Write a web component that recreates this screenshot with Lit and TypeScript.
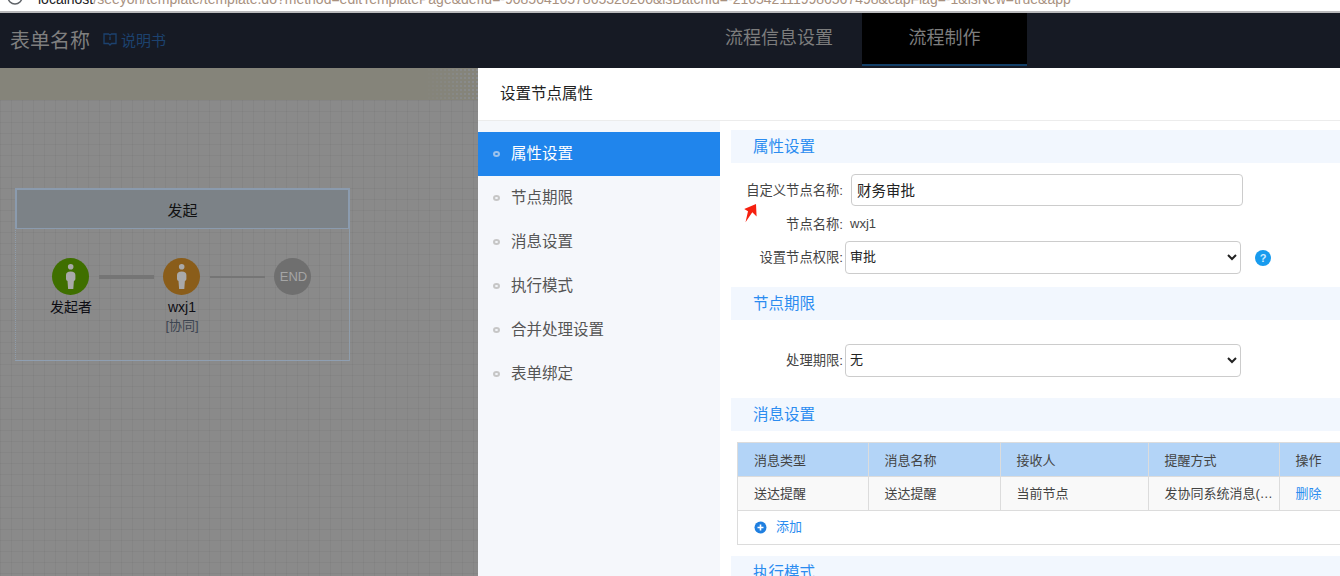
import { LitElement, html, css, svg, unsafeCSS } from 'lit';
import { customElement, state } from 'lit/decorators.js';

const FONT = unsafeCSS(`"Liberation Sans", "Noto Sans CJK SC", sans-serif`);

const NAV_ITEMS = ['属性设置', '节点期限', '消息设置', '执行模式', '合并处理设置', '表单绑定'];

// positions on the flow canvas, relative to the canvas origin (y = 100 on page)
const FLOW_NODES = [
  { x: 52, y: 158, color: '#3f6f00', label: '发起者', person: true },
  { x: 163, y: 158, color: '#8a5d1a', label: 'wxj1', sub: '[协同]', person: true },
  { x: 274, y: 158, color: '#6f6f6f', label: '', person: false },
];

const FLOW_EDGES = [
  { x: 99, y: 175, w: 55, h: 4 },
  { x: 210, y: 176, w: 55, h: 2 },
];

const personIcon = svg`
  <circle cx="18.7" cy="8.7" r="2.800" fill="#a9a9a9"></circle>
  <path d="M14 17q0-3.500 4.700-3.500t4.700 3.500v4q0 1.500-1.500 2l-.6 8h-5.200l-.6-8q-1.500-.5-1.500-2z" fill="#a9a9a9"></path>
`;

@customElement('app-root')
export class AppRoot extends LitElement {
  static styles = css`
    :host {
      display: block;
      width: 1340px;
      height: 576px;
      overflow: hidden;
      position: relative;
      background: #fff;
      font-family: ${FONT};
    }

    /* --- browser url strip, cut off at the top --- */
    .strip {
      height: 11px;
      display: flex;
      align-items: flex-end;
      overflow: hidden;
      background: #fff;
      border-bottom: 2px solid #b9b9bb;
      padding-left: 7px;
      gap: 15px;
    }
    .strip svg { flex: none; margin-bottom: 6px; }
    .url {
      font: 14px/18px 'Liberation Sans', sans-serif;
      white-space: nowrap;
      margin-bottom: 3px;
      color: #a8917f;
    }
    .url b { font-weight: 400; color: #202124; }

    /* --- dark page header --- */
    header {
      height: 55px;
      background: #161a24;
      display: flex;
      align-items: stretch;
      padding-left: 10px;
    }
    .form-name {
      font-size: 20px;
      line-height: 56px;
      color: #7f7f7f;
    }
    .manual {
      display: flex;
      align-items: center;
      gap: 4px;
      margin-left: 13px;
      padding-bottom: 2px;
      font-size: 15px;
      color: #1c426f;
    }
    .tabs {
      position: absolute;
      left: 696px;
      top: 13px;
      height: 53px;
      display: flex;
    }
    .tab {
      width: 166px;
      box-sizing: border-box;
      text-align: center;
      font-size: 18px;
      line-height: 51px;
      color: #7d7d7d;
    }
    .tab.active {
      width: 165px;
      background: #000;
      border-bottom: 2px solid #123f68;
    }

    /* --- dimmed flow canvas --- */
    .band {
      height: 32px;
      background: #85847a;
      position: relative;
    }
    .band::after {
      content: '';
      position: absolute;
      right: 862px;
      top: 0;
      bottom: 0;
      width: 55px;
      background: radial-gradient(circle, #8a8d90 0.8px, transparent 1px) 0 0 / 4px 4px;
      -webkit-mask-image: linear-gradient(to right, transparent, #000);
    }
    .canvas {
      position: relative;
      height: 476px;
      background-color: #8a8a8a;
      background-image:
        linear-gradient(to right, rgba(0, 0, 0, 0.035) 1px, transparent 1px),
        linear-gradient(to bottom, rgba(0, 0, 0, 0.035) 1px, transparent 1px);
      background-size: 11px 11px;
    }
    .lane {
      position: absolute;
      left: 15px;
      top: 88px;
      width: 335px;
      height: 173px;
      box-sizing: border-box;
      border-left: 1px dotted #8f9dab;
      border-right: 1px solid #8f9dab;
      border-bottom: 1px solid #8f9fb2;
    }
    .lane-head {
      margin: 0 -1px;
      height: 41px;
      box-sizing: border-box;
      border: 2px solid #8b9bae;
      border-bottom-width: 1px;
      background: #7c8287;
      text-align: center;
      font-size: 15px;
      line-height: 42px;
      color: #111;
    }
    .edge {
      position: absolute;
      background: #757575;
    }
    .node {
      position: absolute;
      width: 37px;
    }
    .node-circle {
      width: 37px;
      height: 37px;
      border-radius: 50%;
      display: flex;
      align-items: center;
      justify-content: center;
      font-size: 13px;
      color: #a5a5a5;
    }
    .node-end { padding-left: 2px; }
    .node-text {
      position: absolute;
      left: calc(50% + 0.5px);
      top: 39px;
      transform: translateX(-50%);
      text-align: center;
      white-space: nowrap;
      font-size: 14px;
      line-height: 20px;
      color: #0d0d14;
    }
    .node-sub {
      font-size: 13px;
      line-height: 18px;
      color: #3c4450;
    }

    /* --- settings drawer --- */
    .drawer {
      position: absolute;
      left: 478px;
      top: 68px;
      right: 0;
      bottom: 0;
      background: #fff;
      display: flex;
      flex-direction: column;
    }
    .drawer-title {
      height: 53px;
      flex: none;
      box-sizing: border-box;
      padding-left: 22px;
      border-bottom: 1px solid #ececec;
      font-size: 15.5px;
      line-height: 51px;
      color: #222;
    }
    .drawer-body {
      flex: 1;
      display: flex;
      min-height: 0;
    }
    nav {
      width: 242px;
      flex: none;
      padding-top: 11px;
      background: #f5f7fb;
    }
    .nav-item {
      height: 44px;
      display: flex;
      align-items: center;
      gap: 11px;
      padding-left: 15px;
      font-size: 15.5px;
      color: #555;
    }
    .nav-item.active {
      background: #2085ec;
      color: #fff;
    }
    .nav-dot {
      width: 7px;
      height: 6px;
      box-sizing: border-box;
      border: 2px solid #c6c6c6;
      border-radius: 50%;
    }
    .nav-item.active .nav-dot { border-color: #9cc2ec; }
    .nav-text { margin-bottom: 4px; }

    main {
      flex: 1;
      min-width: 0;
      padding: 9px 0 0 11px;
      overflow: hidden;
    }
    .section-head {
      height: 33px;
      box-sizing: border-box;
      padding-left: 22px;
      background: #f2f7fe;
      font-size: 15.5px;
      line-height: 34px;
      color: #2b8cf0;
    }
    .form-group {
      padding: 11px 0 13px;
    }
    .form-group.period { padding: 24px 0 21px; }
    .row {
      display: flex;
      align-items: center;
    }
    .row-plain {
      height: 20px;
      margin: 8px 0 7px;
    }
    .label {
      width: 112px;
      flex: none;
      padding-bottom: 2px;
      text-align: right;
      font-size: 13.3px;
      color: #444;
      white-space: nowrap;
    }
    .value {
      margin-left: 7px;
      padding-bottom: 2px;
      font-size: 13px;
      color: #444;
    }
    input {
      margin-left: 8px;
      width: 392px;
      height: 32px;
      box-sizing: border-box;
      padding: 0 5px 2px;
      border: 1px solid #ccc;
      border-radius: 4px;
      font: 14.5px ${FONT};
      color: #222;
      outline: none;
    }
    select {
      margin-left: 2px;
      width: 396px;
      height: 33px;
      box-sizing: border-box;
      padding-bottom: 2px;
      border: 1px solid #ccc;
      border-radius: 4px;
      background: #fff;
      font: 13px ${FONT};
      color: #222;
      outline: none;
    }
    .help {
      margin-left: 14px;
      width: 16px;
      height: 16px;
      border-radius: 50%;
      background: #189bee;
      color: #cfeaff;
      font: 700 11px/16px 'Liberation Sans', sans-serif;
      text-align: center;
    }

    /* --- message table --- */
    .table-wrap {
      margin: 11px 0 11px 6px;
      width: 640px;
      border: 1px solid #dcdcdc;
      box-sizing: border-box;
    }
    table {
      width: 100%;
      table-layout: fixed;
      border-collapse: collapse;
      font-size: 13px;
      color: #444;
    }
    th, td {
      padding: 0 4px 0 16px;
      box-sizing: border-box;
      border-right: 1px solid #dcdcdc;
      border-bottom: 1px solid #dcdcdc;
      text-align: left;
      font-weight: 400;
      white-space: nowrap;
      overflow: hidden;
      text-overflow: ellipsis;
    }
    th { background: #b3d4f7; height: 33px; }
    td { background: #f9f9f9; height: 34px; padding-bottom: 2px; }
    .del { color: #2b8cf0; }
    .add {
      height: 33px;
      box-sizing: border-box;
      display: flex;
      align-items: center;
      gap: 9px;
      padding: 0 0 3px 16px;
      font-size: 13px;
      color: #2b8cf0;
    }
    .add svg { margin-top: 4px; }

    .pointer {
      position: absolute;
      left: 740px;
      top: 200px;
    }
  `;

  @state() private selected = 0;

  render() {
    return html`
      <div class="strip">
        <svg width="16" height="16" viewBox="0 0 16 16" fill="none" stroke="#5f6368" stroke-width="1.500">
          <circle cx="8" cy="8" r="7"></circle>
        </svg>
        <div class="url"><b>localhost</b>/seeyon/template/template.do?method=editTemplatePage&amp;defId=-9085041657865328200&amp;isBatchId=-2165421119986567498&amp;capFlag=-1&amp;isNew=true&amp;app</div>
      </div>

      <header>
        <div class="form-name">表单名称</div>
        <div class="manual">
          <svg width="14" height="13" viewBox="0 0 14 13" fill="none" stroke="#1c426f" stroke-width="1.300">
            <path d="M1 1h4.500l1.500 1 1.500-1h4.500v9.500h-4.500l-1.500 1.500-1.500-1.500h-4.500z"></path>
            <path d="M7 3.500v3.500"></path>
          </svg>
          说明书
        </div>
        <div class="tabs">
          <div class="tab">流程信息设置</div>
          <div class="tab active">流程制作</div>
        </div>
      </header>

      <div class="band"></div>
      <div class="canvas">
        <div class="lane">
          <div class="lane-head">发起</div>
        </div>
        ${FLOW_EDGES.map(
          (e) => html`<div class="edge" style="left:${e.x}px;top:${e.y}px;width:${e.w}px;height:${e.h}px"></div>`
        )}
        ${FLOW_NODES.map(
          (n) => html`
            <div class="node" style="left:${n.x}px;top:${n.y}px">
              <div class="node-circle" style="background:${n.color}">
                ${n.person
                  ? html`<svg width="37" height="37" viewBox="0 0 37 37">${personIcon}</svg>`
                  : html`<span class="node-end">END</span>`}
              </div>
              ${n.label
                ? html`<div class="node-text">
                    ${n.label}
                    ${n.sub ? html`<div class="node-sub">${n.sub}</div>` : ''}
                  </div>`
                : ''}
            </div>
          `
        )}
      </div>

      <div class="drawer">
        <div class="drawer-title">设置节点属性</div>
        <div class="drawer-body">
          <nav>
            ${NAV_ITEMS.map(
              (item, i) => html`
                <div class="nav-item ${i === this.selected ? 'active' : ''}">
                  <span class="nav-dot"></span><span class="nav-text">${item}</span>
                </div>
              `
            )}
          </nav>
          <main>
            <div class="section-head">属性设置</div>
            <div class="form-group">
              <div class="row">
                <div class="label">自定义节点名称:</div>
                <input .value=${'财务审批'} />
              </div>
              <div class="row row-plain">
                <div class="label">节点名称:</div>
                <div class="value">wxj1</div>
              </div>
              <div class="row">
                <div class="label">设置节点权限:</div>
                <select><option>审批</option></select>
                <div class="help">?</div>
              </div>
            </div>

            <div class="section-head">节点期限</div>
            <div class="form-group period">
              <div class="row">
                <div class="label">处理期限:</div>
                <select><option>无</option></select>
              </div>
            </div>

            <div class="section-head">消息设置</div>
            <div class="table-wrap">
              <table>
                <colgroup>
                  <col style="width:130px" /><col style="width:132px" /><col style="width:148px" />
                  <col style="width:131px" /><col />
                </colgroup>
                <tr><th>消息类型</th><th>消息名称</th><th>接收人</th><th>提醒方式</th><th>操作</th></tr>
                <tr>
                  <td>送达提醒</td><td>送达提醒</td><td>当前节点</td><td>发协同系统消息(微信)</td>
                  <td class="del">删除</td>
                </tr>
              </table>
              <div class="add">
                <svg width="13" height="13" viewBox="0 0 13 13">
                  <circle cx="6.500" cy="6.500" r="6" fill="#1f7fe0"></circle>
                  <path d="M6.500 3.500v6M3.500 6.500h6" stroke="#fff" stroke-width="1.600"></path>
                </svg>
                添加
              </div>
            </div>

            <div class="section-head">执行模式</div>
          </main>
        </div>
      </div>

      <svg class="pointer" width="20" height="26" viewBox="0 0 20 26">
        <path d="M16 4l.6 12.500-4.300-4.300-6.800 10 2.500-11-3.800-2.200z" fill="#f5200f"></path>
      </svg>
    `;
  }
}
